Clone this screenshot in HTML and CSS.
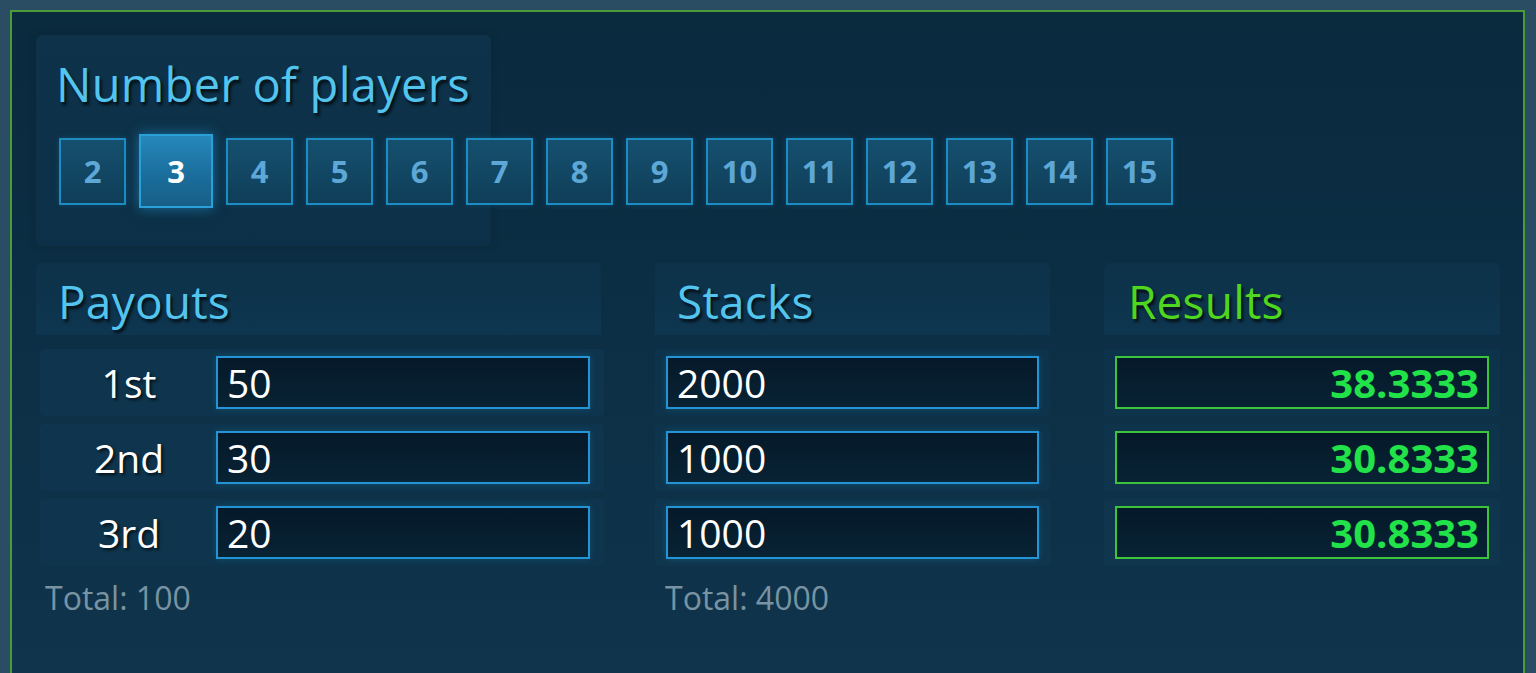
FILE: index.html
```html
<!DOCTYPE html>
<html>
<head>
<meta charset="utf-8">
<link rel="stylesheet" href="styles.css">
</head>
<body>
<div class="panel">
  <section class="players">
    <h2 class="title">Number of players</h2>
    <div class="btns">
      <div class="btn">2</div>
      <div class="btn sel">3</div>
      <div class="btn">4</div>
      <div class="btn">5</div>
      <div class="btn">6</div>
      <div class="btn">7</div>
      <div class="btn">8</div>
      <div class="btn">9</div>
      <div class="btn">10</div>
      <div class="btn">11</div>
      <div class="btn">12</div>
      <div class="btn">13</div>
      <div class="btn">14</div>
      <div class="btn">15</div>
    </div>
  </section>
  <div class="cols">
    <section class="col payouts">
      <div class="head"><h2 class="title">Payouts</h2></div>
      <div class="row"><span class="lbl">1st</span><div class="field">50</div></div>
      <div class="row"><span class="lbl">2nd</span><div class="field">30</div></div>
      <div class="row"><span class="lbl">3rd</span><div class="field">20</div></div>
      <div class="total">Total: 100</div>
    </section>
    <section class="col stacks">
      <div class="head"><h2 class="title">Stacks</h2></div>
      <div class="row"><div class="field">2000</div></div>
      <div class="row"><div class="field">1000</div></div>
      <div class="row"><div class="field">1000</div></div>
      <div class="total">Total: 4000</div>
    </section>
    <section class="col results">
      <div class="head"><h2 class="title green">Results</h2></div>
      <div class="row"><div class="field res">38.3333</div></div>
      <div class="row"><div class="field res">30.8333</div></div>
      <div class="row"><div class="field res">30.8333</div></div>
    </section>
  </div>
</div>
</body>
</html>
```
FILE: styles.css
```css
html, body {
  margin: 0;
  padding: 0;
}
body {
  background: #2b4d63;
  font-family: "Open Sans", "DejaVu Sans", sans-serif;
  height: 673px;
  overflow: hidden;
}
.panel {
  margin: 10px 0 0 10px;
  width: 1515px;
  height: 663px;
  box-sizing: border-box;
  border: 2px solid #4a9c36;
  border-bottom: 0;
  background: linear-gradient(180deg, #0a2a3e 0%, #0c2f45 50%, #0f344b 100%);
  padding: 23px 0 0 24px;
  overflow: hidden;
}
.title {
  margin: 0;
  font-weight: 400;
  font-size: 46px;
  line-height: 56px;
  color: #52c4ee;
  text-shadow: 2px 3px 3px rgba(0, 0, 0, 0.75);
  letter-spacing: 0.2px;
}
.players .title {
  font-size: 47px;
  letter-spacing: 0.3px;
  margin-top: -1px;
  margin-bottom: -2px;
  margin-left: -2px;
}
.title.green {
  color: #4fd61e;
}
.players {
  width: 455px;
  height: 211px;
  box-sizing: border-box;
  background: linear-gradient(180deg, #0d3249 0%, #0c3047 100%);
  border-radius: 6px;
  padding: 22px 0 0 22px;
  box-shadow: 0 0 10px rgba(0, 0, 0, 0.15);
}
.btns {
  display: flex;
  align-items: center;
  gap: 13px;
  margin-top: 24px;
  height: 74px;
  margin-left: 1px;
}
.btn {
  flex: none;
  width: 67px;
  height: 67px;
  box-sizing: border-box;
  border: 2px solid #1c8cc3;
  background: linear-gradient(180deg, #15506f 0%, #0f3e58 100%);
  color: #5ea8d8;
  font-weight: 700;
  font-size: 31px;
  display: flex;
  align-items: center;
  justify-content: center;
  box-shadow: 0 0 6px rgba(30, 140, 200, 0.25);
}
.btn.sel {
  width: 74px;
  height: 74px;
  border-color: #2aa0d8;
  background: linear-gradient(180deg, #2588bb 0%, #1a6c9a 60%, #175f88 100%);
  color: #ffffff;
  box-shadow: 0 0 12px rgba(40, 160, 230, 0.55);
}
.cols {
  display: flex;
  gap: 54px;
  margin-top: 17px;
}
.col {
  flex: none;
}
.payouts { width: 565px; }
.stacks { width: 395px; }
.results { width: 396px; }
.head {
  height: 72px;
  background: linear-gradient(180deg, #0d3249 0%, #0e3650 100%);
  border-radius: 6px 6px 0 0;
  padding: 10px 0 0 22px;
  box-sizing: border-box;
  margin-bottom: 14px;
}
.results .head { padding-left: 24px; }
.row {
  height: 67px;
  box-sizing: border-box;
  display: flex;
  align-items: center;
  padding: 0 11px;
  margin-bottom: 8px;
  border-radius: 4px;
  background: rgba(20, 70, 100, 0.18);
}
.payouts .row {
  margin-left: 4px;
  width: 564px;
  padding: 0 10px 0 0;
  background: #0e354d;
}
.lbl {
  width: 176px;
  padding-left: 2px;
  box-sizing: border-box;
  text-align: center;
  color: #ffffff;
  font-size: 39px;
  text-shadow: 2px 2px 3px rgba(0, 0, 0, 0.7);
}
.field {
  width: 374px;
  height: 53px;
  box-sizing: border-box;
  border: 2px solid #2394d6;
  background: linear-gradient(180deg, #05192a 0%, #082334 100%);
  color: #ffffff;
  font-size: 39px;
  line-height: 49px;
  padding-left: 9px;
  box-shadow: 0 0 6px rgba(40, 150, 220, 0.25);
}
.field.res {
  border-color: #3cc43a;
  color: #22e24a;
  font-weight: 700;
  font-size: 40px;
  text-align: right;
  padding: 0 8px 0 0;
  box-shadow: none;
}
.total {
  color: #7893a3;
  font-size: 32px;
  margin-top: 12px;
  padding-left: 9px;
  line-height: 40px;
}
.stacks .total { padding-left: 10px; }
```
